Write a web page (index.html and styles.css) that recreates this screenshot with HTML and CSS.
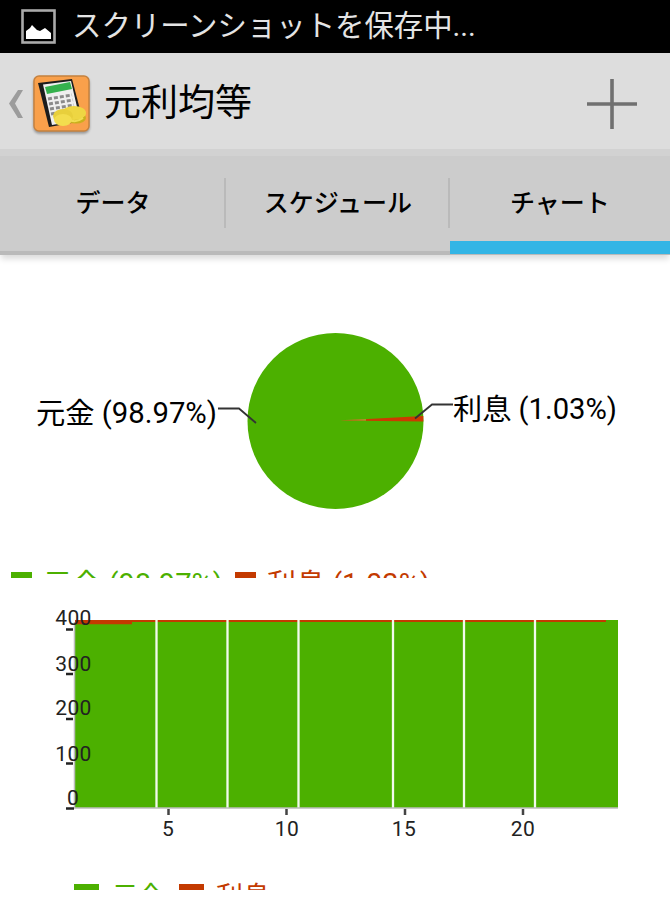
FILE: index.html
```
<!DOCTYPE html>
<html lang="ja">
<head>
    <meta charset="UTF-8">
    <meta name="viewport" content="width=device-width, initial-scale=1.0">
    <title>元利均等</title>
    <link rel="stylesheet" href="styles.css">
</head>
<body>

    <div class="status">
      <svg class="status-icon" width="36" height="36" viewBox="0 0 36 36">
        <rect x="1.5" y="1.5" width="32" height="32" fill="#000" stroke="#aaa" stroke-width="2.6"/>
        <path d="M5 30V22l4-3 2-3 5 5 3 1 5-3 6 5v6z" fill="#fff"/>
      </svg>
      <span>スクリーンショットを保存中...</span>
    </div>

    <div class="header">
      <svg class="back" width="16" height="32" viewBox="0 0 16 32">
        <path d="M15 2h-5L1 15.500 10 30h5L7 15.500z" fill="#9c9c9c"/>
      </svg>
      <svg class="app-icon" width="58" height="58" viewBox="0 0 58 58">
        <rect x="1" y="1" width="55" height="55" rx="5" fill="#f9a04b" stroke="#c4813f" stroke-width="1.500"/>
        <path d="M5 8L39 4l11 42-34 6z" fill="#1c1c1c"/>
        <path d="M10 9.500L38 6l9 39-28 5z" fill="#efefef"/>
        <path d="M12 12l25-5 2 7-25 5z" fill="#35b14d"/>
        <path d="M15 24l24-4M16 29l24-4M17 34l24-4M18 39l24-4" stroke="#8b8b8b" stroke-width="3" stroke-dasharray="4 2"/>
        <ellipse cx="43" cy="43" rx="10" ry="5.500" fill="#c9b01d"/>
        <ellipse cx="41" cy="38" rx="12" ry="7" fill="#eed643"/>
        <ellipse cx="30" cy="41" rx="10" ry="7" fill="#e8cf3c"/>
        <ellipse cx="30" cy="45" rx="9" ry="6" fill="#f3dd4e"/>
        <path d="M37 45c4 2 9 1 13-2" stroke="#f0dd52" stroke-width="2" fill="none"/>
      </svg>
      <h1>元利均等</h1>
      <svg class="add" width="50" height="50" viewBox="0 0 50 50">
        <path d="M25 0v50M0 25h50" stroke="#707070" stroke-width="3.600"/>
      </svg>
    </div>

    <ul class="tabs">
      <li>データ</li>
      <li>スケジュール</li>
      <li class="current">チャート</li>
    </ul>

    <div class="pie">
      <svg width="670" height="323" viewBox="0 255 670 323">
        <circle cx="335.500" cy="421" r="88" fill="#4cb000"/>
        <path d="M340 420.500L423.300 416V421.500z" fill="#cc3a00"/>
        <path d="M340 420.300l26-1.300v1.700z" fill="#a79a27"/>
        <path d="M218 408.500h21l17 14.500M453 404.500h-21l-17 14" class="line"/>
        <text x="36" y="423" textLength="181" lengthAdjust="spacingAndGlyphs"><tspan dy="1">元金</tspan><tspan dy="-1"> (98.97%)</tspan></text>
        <text x="453" y="419" textLength="164" lengthAdjust="spacingAndGlyphs"><tspan dy="1">利息</tspan><tspan dy="-1"> (1.03%)</tspan></text>
        <rect x="11" y="572" width="21" height="21" fill="#4cb000"/>
        <text x="43" y="593" class="green" textLength="180" lengthAdjust="spacingAndGlyphs"><tspan dy="2">元金</tspan><tspan dy="-1"> (98.97%)</tspan></text>
        <rect x="235" y="572" width="21" height="21" fill="#c33a00"/>
        <text x="267" y="593" class="red" textLength="163" lengthAdjust="spacingAndGlyphs"><tspan dy="2">利息</tspan><tspan dy="-1"> (1.03%)</tspan></text>
      </svg>
    </div>

    <div class="bar">
      <svg width="670" height="312" viewBox="0 578 670 312">
        <rect x="75" y="620" width="543" height="188" fill="#4cb000"/>
        <path d="M75 621h531" stroke="#c33a00" stroke-width="2"/>
        <path d="M75 623h57" stroke="#c33a00" stroke-width="2.500"/>
        <path d="M156.500 620v188M227.500 620v188M298.500 620v188M393 620v188M464 620v188M535 620v188" stroke="#f2faec" stroke-width="2.300"/>
        <path d="M74.500 622v186M74 808h544" stroke="#bcbcbc" stroke-width="1.500" fill="none"/>
        <path d="M66 629.500h7M66 674h7M66 719h7M66 763.500h7M66 808.500h8" stroke="#222" stroke-width="2.300"/>
        <path d="M168.500 809v6M286.500 809v6M405 809v6M523 809v6" stroke="#444" stroke-width="2.500"/>
        <g class="axis">
          <text x="73.500" y="624.500">400</text>
          <text x="73.500" y="670.500">300</text>
          <text x="73.500" y="714.500">200</text>
          <text x="73.500" y="760.500">100</text>
          <text x="73" y="804.500">0</text>
          <text x="168" y="836">5</text>
          <text x="287" y="836">10</text>
          <text x="404" y="836">15</text>
          <text x="523" y="836">20</text>
        </g>
        <rect x="74" y="884" width="25" height="21" fill="#4cb000"/>
        <text x="112" y="908" class="green" textLength="52" lengthAdjust="spacingAndGlyphs">元金</text>
        <rect x="179" y="884" width="25" height="21" fill="#c33a00"/>
        <text x="216" y="908" class="red" textLength="54" lengthAdjust="spacingAndGlyphs">利息</text>
      </svg>
    </div>

</body>
</html>
```

FILE: styles.css
```
body, h1, ul, li {
  margin: 0;
  padding: 0;
}

ul {
  list-style-type: none;
}

body {
  background: #fff;
  color: #000;
  font-family: Roboto, "Noto Sans CJK JP", sans-serif;
}

svg {
  display: block;
}

.status {
  display: flex;
  align-items: center;
  box-sizing: border-box;
  height: 53px;
  padding-left: 21px;
  background: #000;
  color: #e4e4e4;
  font-size: 29.4px;
  line-height: 53px;
}

.status-icon {
  margin-right: 15px;
}

.status span {
  height: 53px;
}

.header {
  display: flex;
  align-items: center;
  box-sizing: border-box;
  height: 96px;
  padding: 5px 33px 0 8px;
  background: #ddd;
}

.app-icon {
  margin: 0 13px 0 9px;
  filter: drop-shadow(0 2px 1px rgba(0, 0, 0, 0.3));
}

.header h1 {
  font-size: 37px;
  font-weight: 400;
  line-height: 51px;
}

.add {
  margin-left: auto;
}

.tabs {
  display: grid;
  grid-template-columns: 226px 224px 1fr;
  box-sizing: border-box;
  height: 106px;
  border-top: 7px solid #d2d2d2;
  background: linear-gradient(#bababa, #bababa) bottom / 100% 4px no-repeat #ccc;
  box-shadow: 0 5px 6px -1px rgba(0, 0, 0, 0.14);
}

.tabs li {
  height: 85px;
  border-bottom: 13px solid transparent;
  background: linear-gradient(#bababa, #bababa) right 22px / 2px 50px no-repeat;
  font-size: 25px;
  font-weight: 500;
  line-height: 95px;
  text-align: center;
}

.tabs li.current {
  border-bottom-color: #33b5e5;
  background: none;
}

.pie text,
.bar text {
  font-size: 29px;
}

.line {
  fill: none;
  stroke: #333;
  stroke-width: 1.8;
}

.green {
  fill: #4cb000;
}

.red {
  fill: #c33a00;
}

.bar .axis text {
  fill: #222;
  font-size: 21px;
  letter-spacing: 0.4px;
  text-anchor: middle;
}
```
